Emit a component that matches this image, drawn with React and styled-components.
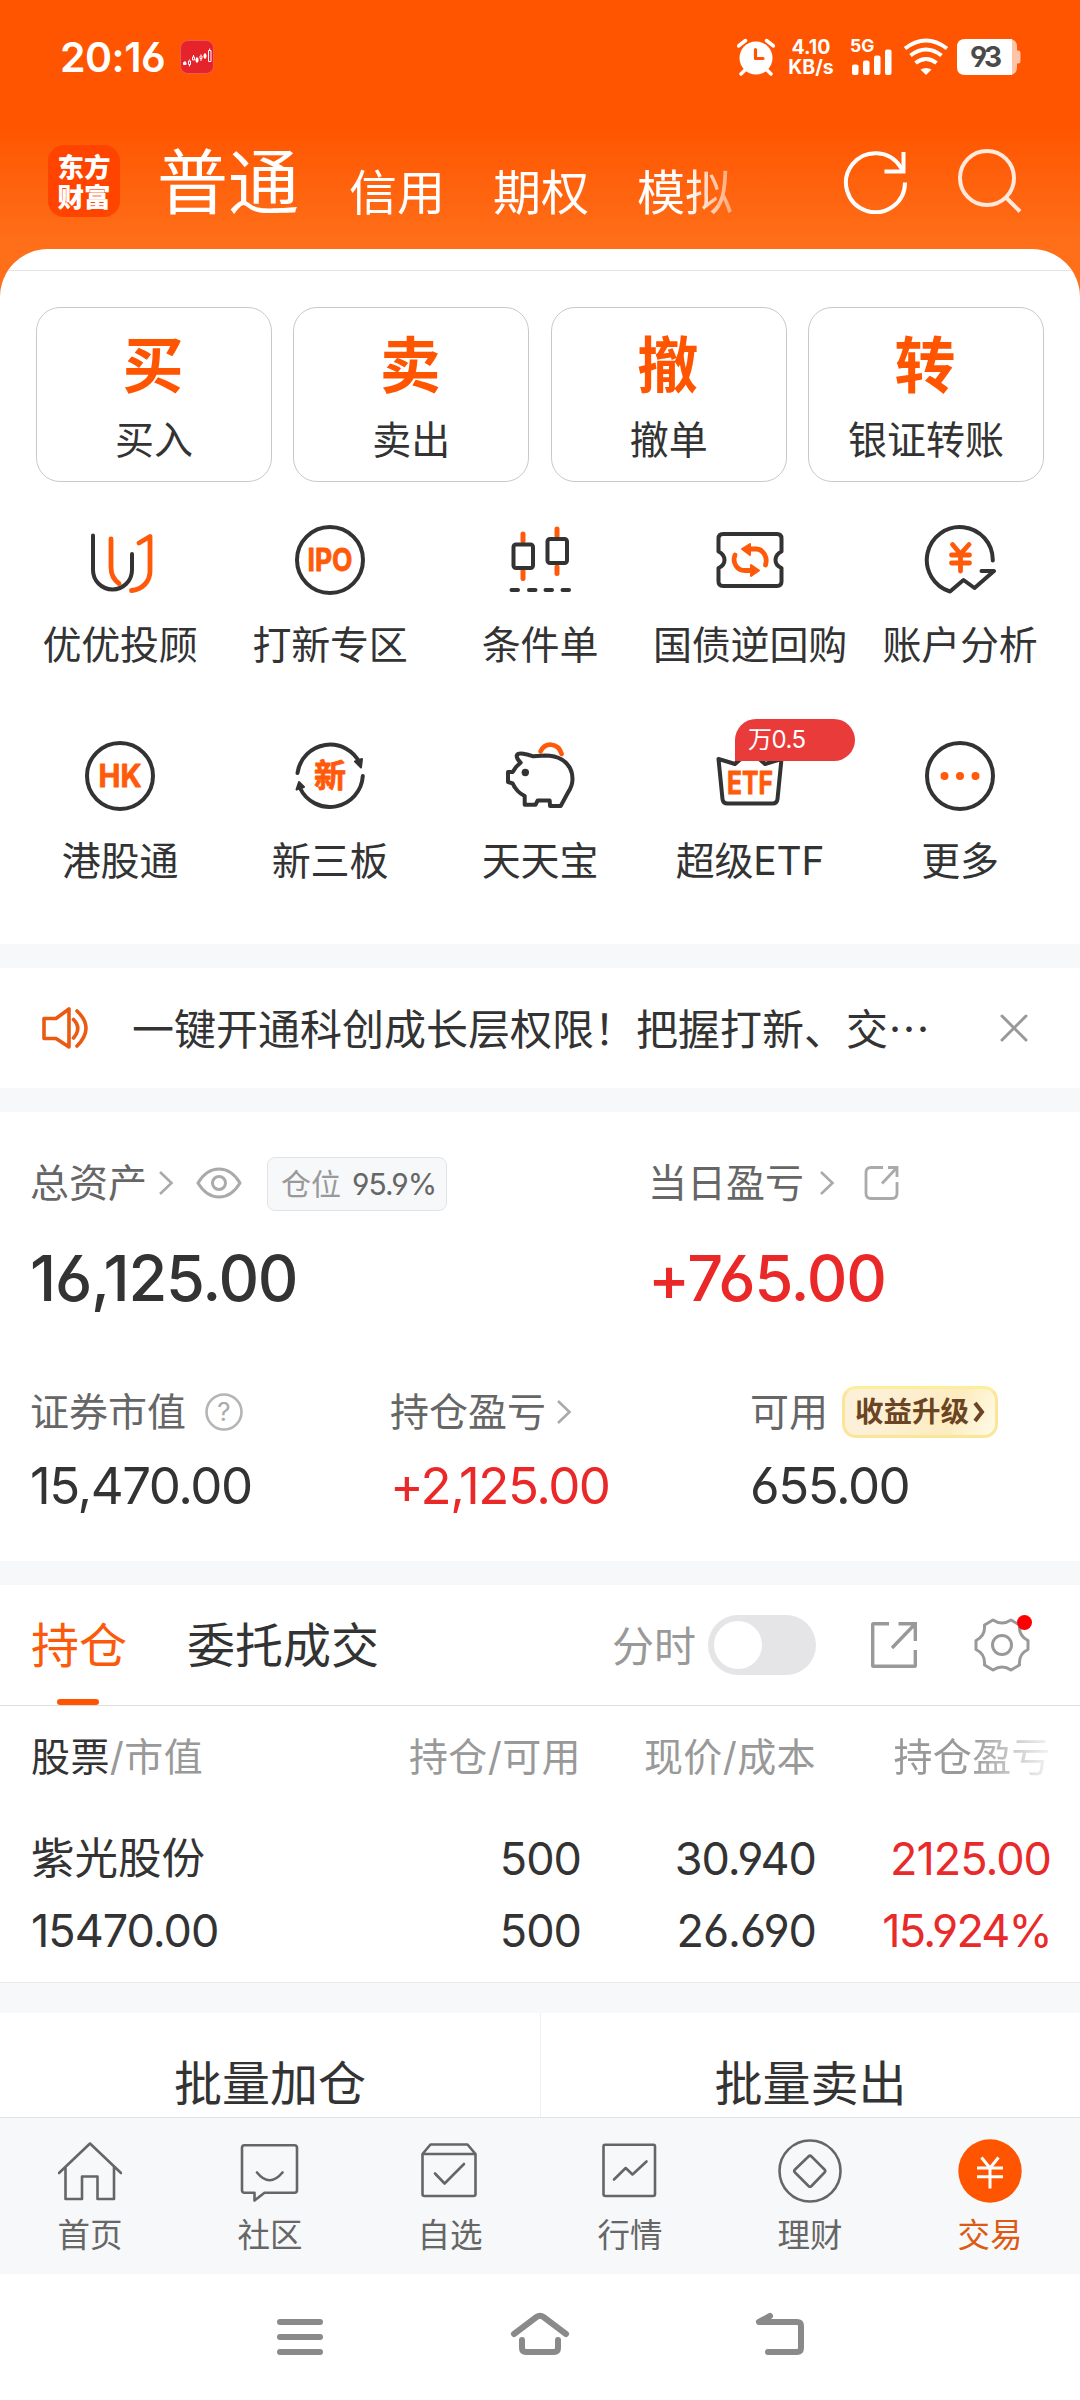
import React from 'react';
import styled, { createGlobalStyle } from 'styled-components';

const App = () => {

    return (
        <>
            <GlobalStyle />
            <Screen>
                <Header>
                    <StatusBar />
                    <TopBar />
                </Header>
                <Content>
                    <MainCard>
                        <Hairline />
                        <TradeButtons>
                            {tradeButtons.map((a) => (
                                <TradeButton key={a.label}>
                                    <strong>{a.mark}</strong>
                                    <span>{a.label}</span>
                                </TradeButton>
                            ))}
                        </TradeButtons>
                        <QuickGrid>
                            {quickItems.map((a) => (
                                <QuickItem key={a.label}>
                                    <QuickIcon>
                                        {a.icon}
                                        {a.badge && <QuickBadge>{a.badge}</QuickBadge>}
                                    </QuickIcon>
                                    <span>{a.label}</span>
                                </QuickItem>
                            ))}
                        </QuickGrid>
                    </MainCard>
                    <Gap $h={24} />
                    <Notice />
                    <Gap $h={24} />
                    <Assets />
                    <Gap $h={24} />
                    <Positions />
                    <Gap $h={31} $line />
                    <BatchRow>
                        <BatchButton>批量加仓</BatchButton>
                        <BatchButton>批量卖出</BatchButton>
                    </BatchRow>
                </Content>
                <TabBar>
                    {tabs.map((a) => (
                        <TabItem key={a.label} $active={a.active}>
                            <svg width="64" height="64" viewBox="0 0 64 64" fill="none" stroke="#666" strokeWidth="2.6" strokeLinejoin="round" strokeLinecap="round">
                                {a.icon}
                            </svg>
                            <span>{a.label}</span>
                        </TabItem>
                    ))}
                </TabBar>
                <SystemBar>
                    <svg width="60" height="60" viewBox="0 0 60 60">
                        <path d="M10 15H50M10 30H50M10 45H50" />
                    </svg>
                    <svg width="60" height="60" viewBox="0 0 60 60">
                        <path d="M4 27L26.5 10Q30 7.500 33.500 10L56 27M12 33V41Q12 45 16 45H44Q48 45 48 41V33" />
                    </svg>
                    <svg width="60" height="60" viewBox="0 0 60 60">
                        <path d="M20 9L9 15H47Q51 15 51 19V41Q51 45 47 45H18" />
                    </svg>
                </SystemBar>
            </Screen>
        </>
    );
};

const StatusBar = () => {
    return (
        <StatusWrapper>
            <StatusTime>20:16</StatusTime>
            <svg className='app-icon' width="34" height="34" viewBox="0 0 34 34">
                <rect x="0.500" y="0.500" width="33" height="33" rx="7.500" fill="#E5232B" stroke="#EF5A4E" />
                <g fill="#fff" stroke="#fff" strokeWidth="1">
                    <path d="M3.500 22.500h2.500v2h-2.500zM5 21v2M16 18.500h2v3h-2zM17 17v6M24 14.500h2v3h-2zM25 13v6" />
                    <path fill="none" d="M8.500 21h2v3.500h-2zM9.500 19.500v1M9.500 25v1.500M12.500 17h2v3h-2zM13.500 15v2M20 16h2v2.500h-2zM21 14.500v1M21 19v2M28.500 10.500h2.500v11h-2.500zM29.700 8.500v2" />
                </g>
            </svg>
            <StatusRight>
                <svg width="38" height="38" viewBox="0 0 38 38">
                    <circle cx="19" cy="20" r="16.500" fill="#fff" />
                    <path d="M1.500 8L8.500 2.500M36.500 8L29.500 2.500M8 32l-4 4M30 32l4 4" stroke="#fff" strokeWidth="3.500" strokeLinecap="round" />
                    <path d="M18.500 11.500V20.500H26" fill="none" stroke="#FF5500" strokeWidth="3.200" strokeLinecap="round" strokeLinejoin="round" />
                </svg>
                <NetSpeed>
                    <span>4.10</span>
                    <span>KB/s</span>
                </NetSpeed>
                <Signal>
                    <b>5G</b>
                    <svg width="42" height="38" viewBox="0 0 42 38" fill="#fff">
                        <rect x="2" y="26.500" width="6.500" height="10.500" rx="2" />
                        <rect x="13" y="22.500" width="6.500" height="14.500" rx="2" />
                        <rect x="24" y="17.500" width="6.500" height="19.500" rx="2" />
                        <rect x="35" y="11.500" width="6.500" height="25.500" rx="2" />
                    </svg>
                </Signal>
                <svg className='wifi' width="46" height="38" viewBox="0 0 46 38" fill="none" stroke="#fff" strokeWidth="4">
                    <path d="M2 10.500Q23 -5.500 44 10.500M7.500 17.500Q23 5.500 38.500 17.500M12.500 25Q23 17 33.500 25" />
                    <path d="M17.500 31.500Q23 28.500 28.500 31.500L23 37z" fill="#fff" stroke="none" />
                </svg>
                <svg className='battery' width="64" height="36" viewBox="0 0 64 36">
                    <path d="M52 0Q60 0 60 8V11.500H61.500Q63.500 11.500 63.500 14V22Q63.500 24.500 61.500 24.500H60V28Q60 36 52 36z" fill="#FFC4A8" />
                    <path d="M8 0H55V36H8Q0 36 0 28V8Q0 0 8 0z" fill="#fff" />
                    <text x="29" y="28" textAnchor="middle" fill="#4A4A4A" fontSize="28" fontWeight="700" textLength="32">93</text>
                </svg>
            </StatusRight>
        </StatusWrapper>
    );
};

const TopBar = () => {
    return (
        <TopWrapper>
            <Logo>东方<br />财富</Logo>
            <AccountTabs>
                <AccountTab $active>普通</AccountTab>
                <AccountTab>信用</AccountTab>
                <AccountTab>期权</AccountTab>
                <AccountTab>模拟</AccountTab>
            </AccountTabs>
            <svg width="66" height="66" viewBox="0 0 66 66" fill="none" stroke="#fff" strokeWidth="4">
                <path d="M62 34.500A29.500 29.500 0 1 1 57.500 19L60 23" />
                <path d="M60.500 4V23.500H41.500" />
            </svg>
            <svg className='search' width="66" height="66" viewBox="0 0 66 66" fill="none" stroke="#FFE8DC" strokeWidth="4">
                <circle cx="30" cy="30" r="27" />
                <path d="M49 49.500L63 63.500" />
            </svg>
        </TopWrapper>
    );
};

const Notice = () => {
    return (
        <NoticeWrapper>
            <svg width="48" height="44" viewBox="0 0 48 44" fill="none" stroke="#EA5A12" strokeWidth="3.600" strokeLinejoin="round" strokeLinecap="round">
                <path d="M2 12.500H14L27 3V41L14 32.500H2zM31.500 13.500Q40 22 31.500 32M35 5Q53 22 35 40" />
            </svg>
            <p>一键开通科创成长层权限！把握打新、交…</p>
            <svg className='close' width="28" height="28" viewBox="0 0 28 28" stroke="#999" strokeWidth="3" strokeLinecap="round">
                <path d="M2 2L26 26M26 2L2 26" />
            </svg>
        </NoticeWrapper>
    );
};

const Chevron = () => (
    <svg width="16" height="26" viewBox="0 0 16 26" fill="none" stroke="#AAA" strokeWidth="2.600">
        <path d="M2 2L13.500 13L2 24" />
    </svg>
);

const Assets = () => {
    return (
        <AssetsWrapper>
            <AssetsTop>
                <AssetCell>
                    <AssetLabel>
                        总资产
                        <Mark $ml={11}><Chevron /></Mark>
                        <Mark $ml={22}>
                            <svg width="46" height="32" viewBox="0 0 46 32" fill="none" stroke="#AAA" strokeWidth="3">
                                <path d="M2 16C8 6 15 2 23 2S38 6 44 16C38 26 31 30 23 30S8 26 2 16z" />
                                <circle cx="23" cy="16" r="6.500" />
                            </svg>
                        </Mark>
                        <RatioTag>仓位 <em>95.9%</em></RatioTag>
                    </AssetLabel>
                    <AssetValue $large>16,125.00</AssetValue>
                </AssetCell>
                <AssetCell>
                    <AssetLabel>
                        当日盈亏
                        <Mark $ml={15}><Chevron /></Mark>
                        <Mark $ml={28}>
                            <svg width="38" height="36" viewBox="0 0 38 36" fill="none" stroke="#AAA" strokeWidth="2.800">
                                <path d="M20 2.500H8Q3 2.500 3 7.500V28.500Q3 33.500 8 33.500H29Q34 33.500 34 28.500V17M25 2.500H34V12M34 2.500L19 18.500" />
                            </svg>
                        </Mark>
                    </AssetLabel>
                    <AssetValue $large $up>+765.00</AssetValue>
                </AssetCell>
            </AssetsTop>
            <AssetsBottom>
                <AssetCell>
                    <AssetLabel>
                        证券市值
                        <Mark $ml={18}>
                            <svg width="40" height="40" viewBox="0 0 40 40">
                                <circle cx="20" cy="20" r="17.500" fill="none" stroke="#B5B5B5" strokeWidth="2.600" />
                                <text x="20" y="29" textAnchor="middle" fill="#AAA" fontSize="26">?</text>
                            </svg>
                        </Mark>
                    </AssetLabel>
                    <AssetValue>15,470.00</AssetValue>
                </AssetCell>
                <AssetCell>
                    <AssetLabel>
                        持仓盈亏
                        <Mark $ml={10}><Chevron /></Mark>
                    </AssetLabel>
                    <AssetValue $up>+2,125.00</AssetValue>
                </AssetCell>
                <AssetCell>
                    <AssetLabel>
                        可用
                        <UpgradeTag>
                            收益升级
                            <svg width="12" height="22" viewBox="0 0 12 22" fill="none" stroke="#6B4423" strokeWidth="4">
                                <path d="M2 2L9 11L2 20" />
                            </svg>
                        </UpgradeTag>
                    </AssetLabel>
                    <AssetValue>655.00</AssetValue>
                </AssetCell>
            </AssetsBottom>
        </AssetsWrapper>
    );
};

const Positions = () => {
    return (
        <PositionsWrapper>
            <PositionTabs>
                <PositionTab $active>持仓</PositionTab>
                <PositionTab>委托成交</PositionTab>
                <PositionTools>
                    <span>分时</span>
                    <Toggle />
                    <svg className='share' width="50" height="50" viewBox="0 0 50 50" fill="none" stroke="#999" strokeWidth="3.400">
                        <path d="M20 3.700H4.500Q3.700 3.700 3.700 4.500V45.500Q3.700 46.300 4.500 46.300H45.500Q46.300 46.300 46.300 45.500V30M29.500 3.700H46.300V21M46.300 3.700L23 28" />
                    </svg>
                    <Settings>
                        <svg width="56" height="56" viewBox="0 0 56 56" fill="none" stroke="#999" strokeWidth="3" strokeLinejoin="round">
                            <path d="M19 3Q28 9 37 3L45.500 8Q44.500 19 54 23.500V32.500Q44.500 37 45.500 48L37 53Q28 47 19 53L10.500 48Q11.500 37 2 32.500V23.500Q11.500 19 10.500 8z" />
                            <circle cx="28" cy="28" r="9.500" />
                        </svg>
                        <i />
                    </Settings>
                </PositionTools>
            </PositionTabs>
            <TableHead>
                <div><b>股票</b>/市值</div>
                <div>持仓/可用</div>
                <div>现价/成本</div>
                <div className='fade'>持仓盈亏</div>
            </TableHead>
            <TableRow>
                <Cell $name>紫光股份</Cell>
                <Cell>500</Cell>
                <Cell>30.940</Cell>
                <Cell $up>2125.00</Cell>
                <Cell>15470.00</Cell>
                <Cell>500</Cell>
                <Cell>26.690</Cell>
                <Cell $up $tight>15.924%</Cell>
            </TableRow>
        </PositionsWrapper>
    );
};

const iconProps = {
    width: 72,
    height: 72,
    viewBox: '0 0 72 72',
    fill: 'none',
    stroke: '#333',
    strokeWidth: 4,
    strokeLinecap: 'round',
    strokeLinejoin: 'round',
};

const IconText = ({ y = 47, size = 31, width, children }) => (
    <text x="36" y={y} textAnchor="middle" fontSize={size} fontWeight="700" fill="#FF5A0A" stroke="#FF5A0A" strokeWidth="0.800" textLength={width} lengthAdjust="spacingAndGlyphs">{children}</text>
);

const tradeButtons = [
    { mark: '买', label: '买入' },
    { mark: '卖', label: '卖出' },
    { mark: '撤', label: '撤单' },
    { mark: '转', label: '银证转账' },
];

const quickItems = [
    {
        label: '优优投顾',
        icon: (
            <svg {...iconProps}>
                <path d="M9 11.500V46a19.500 19.500 0 0 0 39 0V30" />
                <path stroke="#FF5A0A" strokeWidth="4.800" d="M27 15V43C27 51 30 56 35 59.500M55 19L66 12.500V47C66 58 58 65.500 47.500 66.500" />
            </svg>
        ),
    },
    {
        label: '打新专区',
        icon: (
            <svg {...iconProps}>
                <circle cx="36" cy="36" r="33" />
                <IconText width={45}>IPO</IconText>
            </svg>
        ),
    },
    {
        label: '条件单',
        icon: (
            <svg {...iconProps}>
                <path stroke="#FF5A0A" strokeWidth="5" d="M19 10V17M19 47V54.500M53 5V12M53 43V49.500" />
                <rect x="9.500" y="20.500" width="19.500" height="23.500" rx="2.500" />
                <rect x="43.500" y="15" width="19.500" height="24" rx="2.500" />
                <path d="M7.500 66H14M25 66H31.500M41.500 66H48M58.500 66H65" />
            </svg>
        ),
    },
    {
        label: '国债逆回购',
        icon: (
            <svg {...iconProps}>
                <path d="M9 10H63Q67.500 10 67.500 14.500V27.500Q61.500 30.500 61.500 36T67.500 44V57.500Q67.500 62 63 62H9Q4.500 62 4.500 57.500V44Q10.500 41.500 10.500 36T4.500 27.500V14.500Q4.500 10 9 10z" />
                <path stroke="#FF5A0A" strokeWidth="4.800" d="M21 31C18 39 23 46.500 31 46.500H37M51.500 41C54 33 49 25 42 25H35" />
                <path fill="#FF5A0A" stroke="#FF5A0A" strokeWidth="2" d="M37 41L45 46.500L37 52zM36 20L28 25L36 31z" />
            </svg>
        ),
    },
    {
        label: '账户分析',
        icon: (
            <svg {...iconProps}>
                <path d="M68.800 36.500A33 33 0 1 0 26 67.500L39.500 56L50.500 64L70 47H57.500" />
                <path stroke="#FF5A0A" strokeWidth="4.800" d="M28.500 20.500L36.500 30L45 20.500M27.500 31H45.500M27.500 39H45.500M36.500 31V47" />
            </svg>
        ),
    },
    {
        label: '港股通',
        icon: (
            <svg {...iconProps}>
                <circle cx="36" cy="36" r="33" />
                <IconText width={43}>HK</IconText>
            </svg>
        ),
    },
    {
        label: '新三板',
        icon: (
            <svg {...iconProps}>
                <path d="M3.500 33A33 33 0 0 1 66 23.500M68.800 36A33 33 0 0 1 6 48" />
                <path fill="#333" strokeWidth="2" d="M61 21.500L68 19L67 27.500zM5 42L2.500 49.500L10 47z" />
                <IconText y={47} size={32}>新</IconText>
            </svg>
        ),
    },
    {
        label: '天天宝',
        icon: (
            <svg {...iconProps}>
                <path d="M4 32H8.700Q12 26 16.700 22.700Q12.500 19 12.700 15.500Q13.500 13 19.300 13.700Q24 14.500 29.300 16.300L41 15.500Q51 15.500 57.700 19.500C65 24 68.500 31 68.500 39Q68.500 46 64 52.500L56.700 66H46L45.700 60.500H33.700L31.500 64.700H20.700V56Q16 53.500 13.700 51Q10 47 8.700 43.500L4 42z" />
                <path stroke="#FF5A0A" strokeWidth="4.600" d="M36.500 11.500C41 2 54 2 57.700 14" />
                <circle cx="21.300" cy="32.500" r="3.700" fill="#333" stroke="none" />
            </svg>
        ),
    },
    {
        label: '超级ETF',
        badge: '万0.5',
        icon: (
            <svg {...iconProps}>
                <path d="M4.500 19L21 24L36 11L51 24L67.500 19L63.500 59Q63 63.500 58.500 63.500H13.500Q9 63.500 8.500 59z" />
                <IconText y={53.5} width={46}>ETF</IconText>
            </svg>
        ),
    },
    {
        label: '更多',
        icon: (
            <svg {...iconProps}>
                <circle cx="36" cy="36" r="33" />
                <path stroke="#FF5A0A" strokeWidth="8" d="M20.500 36h0M36 36h0M51.500 36h0" />
            </svg>
        ),
    },
];

const tabs = [
    { label: '首页', icon: <path d="M1 34L32 4.500L63 34M7.500 28V60H24V37.500H39.500V60H56V28" /> },
    { label: '社区', icon: <path d="M6.500 6.300H56.500Q59 6.300 59 8.800V51.200Q59 53.700 56.500 53.700H26.500L16.500 61.500V53.700H6.500Q4 53.700 4 51.200V8.800Q4 6.300 6.500 6.300zM19 33.500Q31.500 49 44.500 33.500" /> },
    { label: '自选', icon: <path d="M4.500 15H57.500V55Q57.500 57 55.500 57H6.500Q4.500 57 4.500 55zL12.500 5.500H49.500L57.500 15M17 34.500L26.600 44.500L46 25" /> },
    { label: '行情', icon: <path d="M7 5.700H55.500Q57 5.700 57 7.500V55Q57 57 55 57H7.500Q5.500 57 5.500 55V7.500Q5.500 5.700 7 5.700zM16 40.500L27.700 29L34.500 35.500L48.500 22.500" /> },
    {
        label: '理财',
        icon: (
            <>
                <circle cx="32" cy="32" r="30.500" />
                <path d="M30.500 17.500Q32 16 33.500 17.500L46.500 30.500Q48 32 46.500 33.500L33.500 47Q32 48.500 30.500 47L17 33.500Q15.500 32 17 30.500z" />
            </>
        ),
    },
    {
        label: '交易',
        active: true,
        icon: (
            <>
                <circle cx="32" cy="32" r="31.700" fill="#FF5500" stroke="none" />
                <path stroke="#fff" strokeWidth="3" strokeLinecap="butt" d="M23.500 18.500L32 29L40.500 18.500M19 29H45M19 37.700H45M32 29V49.500" />
            </>
        ),
    },
];

const GlobalStyle = createGlobalStyle`
    * {
        box-sizing: border-box;
    }
    body {
        margin: 0;
        font-family: 'Inter', 'Noto Sans CJK SC', sans-serif;
        font-feature-settings: 'cv03', 'cv04';
        color: #333;
        background: #fff;
    }
    p {
        margin: 0;
    }
    svg {
        display: block;
        flex-shrink: 0;
    }
`

const Screen = styled.div`
    width: 1080px;
    height: 2400px;
    display: flex;
    flex-direction: column;
    overflow: hidden;
    background: #fff;
`

const Header = styled.header`
    height: 297px;
    flex-shrink: 0;
    background: linear-gradient(180deg, #FF5500 0, #FF5500 125px, #FF6F1A 245px, #FF6F1A 100%);
    color: #fff;
`

const StatusWrapper = styled.div`
    height: 113px;
    padding: 0 59px 0 60px;
    display: flex;
    align-items: center;
    .app-icon{
        margin-left: 17px;
    }
`

const StatusTime = styled.div`
    width: 103px;
    font-size: 41px;
    font-weight: 600;
    white-space: nowrap;
    letter-spacing: -0.5px;
`

const StatusRight = styled.div`
    margin-left: auto;
    display: flex;
    align-items: center;
    .wifi{
        margin-left: 10px;
    }
    .battery{
        margin-left: 8px;
    }
`

const NetSpeed = styled.div`
    width: 46px;
    margin: 0 16px 0 13px;
    display: flex;
    flex-direction: column;
    align-items: center;
    font-size: 19.500px;
    line-height: 20px;
    font-weight: 700;
`

const Signal = styled.div`
    width: 43px;
    height: 38px;
    position: relative;
    b{
        position: absolute;
        top: 0;
        left: 0;
        font-size: 17.500px;
        line-height: 16px;
        font-weight: 700;
    }
`

const TopWrapper = styled.div`
    height: 136px;
    padding: 0 57px 0 48px;
    display: flex;
    align-items: center;
    .search{
        margin-left: 48px;
    }
`

const Logo = styled.div`
    width: 72px;
    height: 72px;
    padding-top: 6px;
    border-radius: 16px;
    background: #FF4400;
    text-align: center;
    font-size: 26.500px;
    line-height: 30px;
    font-weight: 900;
    font-family: 'Noto Sans CJK SC', sans-serif;
`

const AccountTabs = styled.div`
    width: 592px;
    height: 136px;
    margin: 0 auto 0 37px;
    display: flex;
    align-items: flex-start;
    gap: 48px;
    mask-image: linear-gradient(90deg, #000 530px, transparent 610px);
`

const AccountTab = styled.div`
    padding-top: ${(props) => props.$active ? '27px' : '38px'};
    margin-right: ${(props) => props.$active ? '2px' : '0'};
    font-size: ${(props) => props.$active ? '71px' : '48px'};
    line-height: 84px;
    white-space: nowrap;
`

const Content = styled.main`
    flex: 1;
    min-height: 0;
    margin-top: -48px;
    overflow: hidden;
    display: flex;
    flex-direction: column;
    > *{
        flex-shrink: 0;
    }
`

const MainCard = styled.section`
    height: 695px;
    background: #fff;
    border-radius: 48px 48px 0 0;
    overflow: hidden;
`

const Hairline = styled.div`
    height: 1px;
    margin-top: 21px;
    background: #E4E4E6;
`

const TradeButtons = styled.div`
    padding: 36px 36px 0;
    display: grid;
    grid-template-columns: repeat(4, 1fr);
    gap: 21.500px;
`

const TradeButton = styled.div`
    height: 175px;
    border: 1px solid #C9C9C9;
    border-radius: 24px;
    display: flex;
    flex-direction: column;
    align-items: center;
    cursor: pointer;
    strong{
        margin: 18px 2px 0 0;
        font-size: 61px;
        line-height: 80px;
        font-weight: 700;
        color: #FF5500;
    }
    span{
        margin-top: 9px;
        font-size: 39px;
        line-height: 50px;
    }
`

const QuickGrid = styled.div`
    padding: 42px 15px 0;
    display: grid;
    grid-template-columns: repeat(5, 210px);
    grid-auto-rows: 216px;
`

const QuickItem = styled.div`
    display: flex;
    flex-direction: column;
    align-items: center;
    cursor: pointer;
    > span{
        margin-top: 24px;
        font-size: 39px;
        line-height: 50px;
        letter-spacing: -0.200px;
        white-space: nowrap;
    }
`

const QuickIcon = styled.div`
    width: 72px;
    height: 72px;
    position: relative;
`

const QuickBadge = styled.div`
    position: absolute;
    top: -21px;
    left: 21px;
    width: 120px;
    height: 42px;
    padding-left: 13px;
    border-radius: 21px 21px 21px 0;
    background: #EA3B3B;
    color: #fff;
    font-size: 24px;
    line-height: 42px;
    letter-spacing: -0.500px;
`

const Gap = styled.div`
    height: ${(props) => props.$h}px;
    background: #F7F8FA;
    border-top: ${(props) => props.$line ? '1px solid #E8E9EB' : 'none'};
`

const NoticeWrapper = styled.section`
    height: 120px;
    padding: 0 52px 0 42px;
    display: flex;
    align-items: center;
    p{
        margin-left: 42px;
        font-family: 'Noto Sans CJK SC', sans-serif;
        font-size: 42px;
        line-height: 60px;
        white-space: nowrap;
        padding-bottom: 2px;
    }
    .close{
        margin-left: auto;
    }
`

const AssetsWrapper = styled.section`
    height: 449px;
    padding: 36px 0 0 30px;
`

const AssetsTop = styled.div`
    display: grid;
    grid-template-columns: 618px 1fr;
    height: 229px;
`

const AssetsBottom = styled.div`
    display: grid;
    grid-template-columns: 360px 360px 1fr;
`

const AssetCell = styled.div`
    display: flex;
    flex-direction: column;
`

const AssetLabel = styled.div`
    height: 70px;
    display: flex;
    align-items: center;
    font-size: 39px;
    line-height: 50px;
    color: #666;
    white-space: nowrap;
`

const Mark = styled.span`
    margin-left: ${(props) => props.$ml}px;
`

const AssetValue = styled.div`
    margin-top: ${(props) => props.$large ? '20px' : '9px'};
    font-size: ${(props) => props.$large ? '63px' : '51px'};
    line-height: ${(props) => props.$large ? '80px' : '60px'};
    font-weight: ${(props) => props.$large ? 500 : 400};
    letter-spacing: ${(props) => props.$large ? '-1.200px' : '-1.450px'};
    color: ${(props) => props.$up ? '#EB2828' : '#333'};
`

const RatioTag = styled.span`
    height: 54px;
    margin: 2px 0 0 25px;
    padding: 0 10px 0 13px;
    display: flex;
    align-items: center;
    gap: 11px;
    border: 1px solid #E3E3E6;
    border-radius: 8px;
    background: #F7F8FA;
    font-size: 30px;
    color: #999;
    em{
        font-style: normal;
        letter-spacing: -0.900px;
        color: #666;
    }
`

const UpgradeTag = styled.span`
    width: 156px;
    height: 52px;
    margin-left: 14px;
    padding-left: 10px;
    display: flex;
    align-items: center;
    gap: 4px;
    border: 3px solid #FBE597;
    border-top-color: #FDEE9A;
    border-radius: 14px;
    background: linear-gradient(115deg, #FDF0D8 20%, #FDECC0 70%, #FFFBE8 100%);
    font-size: 28.5px;
    font-weight: 700;
    color: #6B4423;
`

const PositionsWrapper = styled.section`
    height: 397px;
`

const PositionTabs = styled.div`
    height: 121px;
    padding: 0 50px 0 31px;
    display: flex;
    align-items: stretch;
    border-bottom: 1px solid #DEDFE1;
`

const PositionTab = styled.div`
    margin-right: 60px;
    position: relative;
    font-size: 48px;
    line-height: 122px;
    color: ${(props) => props.$active ? '#FA5A0A' : '#333'};
    white-space: nowrap;
    &:after{
        content: '';
        display: ${(props) => props.$active ? 'block' : 'none'};
        position: absolute;
        left: 26px;
        bottom: 0;
        width: 42px;
        height: 6px;
        border-radius: 3px;
        background: #FF5500;
    }
`

const PositionTools = styled.div`
    margin-left: auto;
    display: flex;
    align-items: center;
    font-size: 42px;
    color: #999;
    span{
        padding-bottom: 3px;
    }
    .share{
        margin: 0 55px 0 53px;
    }
`

const Toggle = styled.div`
    width: 108px;
    height: 60px;
    margin-left: 12px;
    padding: 6px;
    border-radius: 30px;
    background: #E5E5E7;
    &:before{
        content: '';
        display: block;
        width: 48px;
        height: 48px;
        border-radius: 50%;
        background: #fff;
    }
`

const Settings = styled.div`
    position: relative;
    i{
        position: absolute;
        top: -2px;
        right: -2px;
        width: 15px;
        height: 15px;
        border-radius: 50%;
        background: #FF0000;
    }
`

const TableHead = styled.div`
    height: 95px;
    padding: 0 29px 0 31px;
    display: grid;
    grid-template-columns: 311px 239px 235px 235px;
    align-items: center;
    font-size: 39px;
    letter-spacing: 0.400px;
    color: #999;
    text-align: right;
    div:first-child{
        text-align: left;
    }
    b{
        font-weight: 400;
        color: #333;
    }
    .fade{
        mask-image: linear-gradient(90deg, #000 65%, rgba(0, 0, 0, 0.1) 100%);
    }
`

const TableRow = styled.div`
    padding: 21px 29px 0 31px;
    display: grid;
    grid-template-columns: 311px 239px 235px 235px;
    grid-auto-rows: 72px;
    align-items: center;
`

const Cell = styled.div`
    font-size: ${(props) => props.$name ? '43.500px' : '45px'};
    padding-bottom: ${(props) => props.$name ? '5px' : '0'};
    letter-spacing: ${(props) => props.$name ? '0' : props.$tight ? '-1.800px' : '-1px'};
    color: ${(props) => props.$up ? '#E92A2A' : '#333'};
    text-align: right;
    &:nth-child(4n + 1){
        text-align: left;
    }
`

const BatchRow = styled.div`
    height: 140px;
    display: grid;
    grid-template-columns: 1fr 1fr;
`

const BatchButton = styled.div`
    font-size: 48px;
    line-height: 141px;
    text-align: center;
    & + &{
        border-left: 1px solid #EFEFF1;
    }
`

const TabBar = styled.nav`
    height: 157px;
    flex-shrink: 0;
    display: grid;
    grid-template-columns: repeat(6, 1fr);
    border-top: 1px solid #E2E3E5;
    background: #F7F8FA;
`

const TabItem = styled.div`
    padding-top: 21px;
    display: flex;
    flex-direction: column;
    align-items: center;
    font-size: 32.500px;
    line-height: 40px;
    color: ${(props) => props.$active ? '#DD5A14' : '#666'};
    cursor: pointer;
    span{
        margin-top: 13px;
    }
`

const SystemBar = styled.div`
    height: 126px;
    flex-shrink: 0;
    padding: 0 180px;
    display: grid;
    grid-template-columns: repeat(3, 1fr);
    place-items: center;
    svg{
        fill: none;
        stroke: #8A8A8A;
        stroke-width: 6px;
        stroke-linecap: round;
        stroke-linejoin: round;
    }
`

export default App;
